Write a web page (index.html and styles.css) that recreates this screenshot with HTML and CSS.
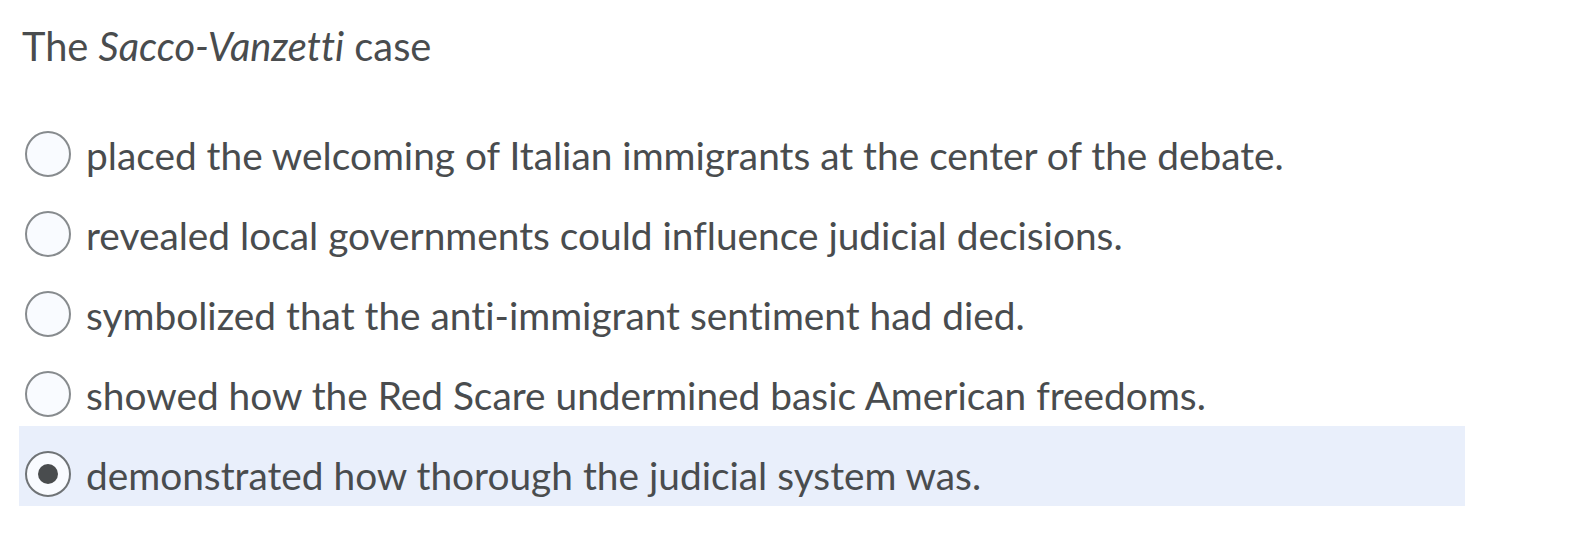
FILE: index.html
```html
<!DOCTYPE html>
<html lang="en">
<head>
<meta charset="utf-8">
<title>Question</title>
<link rel="stylesheet" href="styles.css">
</head>
<body>
<div class="question">
  <div class="prompt">The <em>Sacco-Vanzetti</em> case</div>
  <div class="options">
    <label class="option"><span class="radio"></span><span class="text">placed the welcoming of Italian immigrants at the center of the debate.</span></label>
    <label class="option"><span class="radio"></span><span class="text">revealed local governments could influence judicial decisions.</span></label>
    <label class="option"><span class="radio"></span><span class="text">symbolized that the anti-immigrant sentiment had died.</span></label>
    <label class="option"><span class="radio"></span><span class="text">showed how the Red Scare undermined basic American freedoms.</span></label>
    <label class="option selected"><span class="radio"><span class="dot"></span></span><span class="text">demonstrated how thorough the judicial system was.</span></label>
  </div>
</div>
</body>
</html>
```
FILE: styles.css
```css
html, body {
  margin: 0;
  padding: 0;
  background: #ffffff;
}
body {
  font-family: Lato, "Noto Sans", sans-serif;
  color: #494c4e;
  font-variant-ligatures: none;
}
.question {
  width: 1446px;
  margin-left: 19px;
}
.prompt {
  font-size: 39.8px;
  line-height: 48px;
  padding-top: 22px;
  padding-left: 3px;
}
.prompt em {
  font-style: italic;
}
.options {
  margin-top: 36px;
  display: flex;
  flex-direction: column;
}
.option {
  display: flex;
  align-items: flex-start;
  height: 80px;
  padding-left: 6px;
  box-sizing: border-box;
}
.option.selected {
  background: #e9effb;
}
.radio {
  flex: none;
  width: 46px;
  height: 46px;
  margin-top: 25px;
  box-sizing: border-box;
  border: 2px solid #878b8e;
  border-radius: 50%;
  background: #f9fbff;
  display: flex;
  align-items: center;
  justify-content: center;
}
.selected .radio {
  border-color: #6f7376;
}
.dot {
  width: 20px;
  height: 20px;
  border-radius: 50%;
  background: #494c4e;
}
.text {
  font-size: 38.85px;
  line-height: 44px;
  margin-top: 27px;
  margin-left: 15px;
  white-space: nowrap;
}
```
